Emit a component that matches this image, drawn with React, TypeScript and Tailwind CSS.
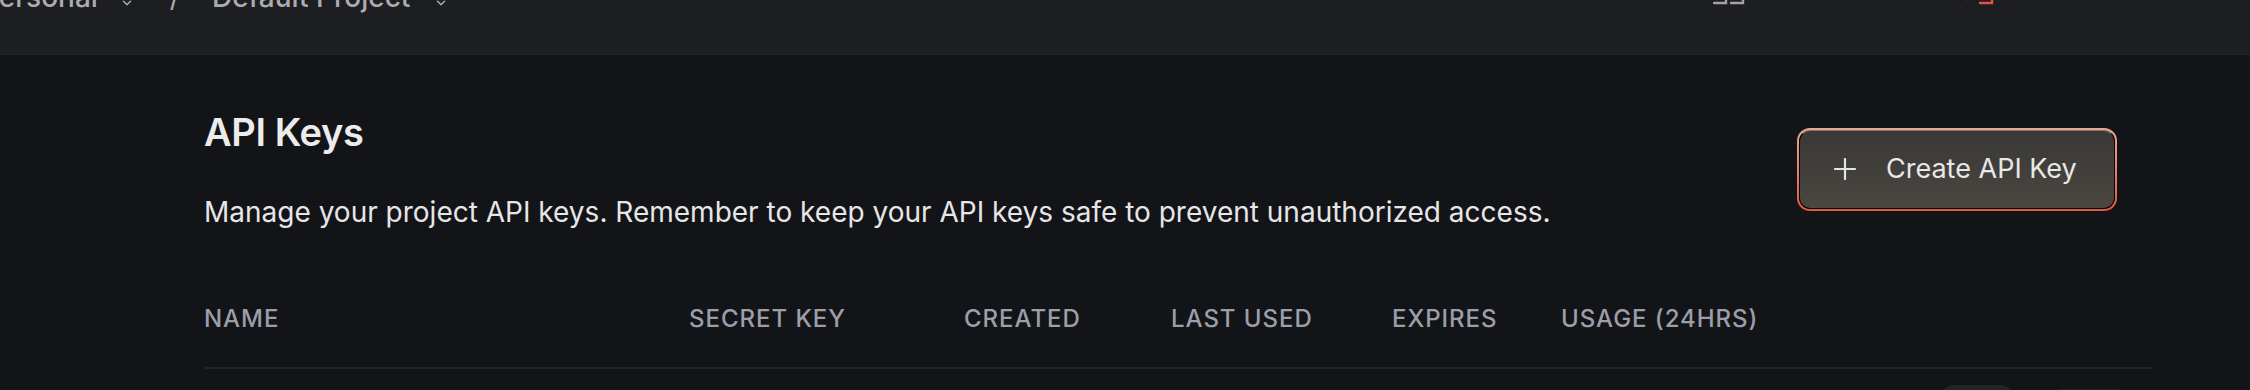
import React from "react";

function Chevron() {
  return (
    <svg width="14" height="14" viewBox="0 0 24 24" fill="none" stroke="#a9a9ab" strokeWidth="2.6" strokeLinecap="round" strokeLinejoin="round" className="translate-y-[6px]">
      <path d="M6 9l6 6 6-6" />
    </svg>
  );
}

const cols = ["NAME", "SECRET KEY", "CREATED", "LAST USED", "EXPIRES", "USAGE (24HRS)"];

export default function App() {
  return (
    <div className="h-[390px] w-[2250px] overflow-hidden bg-[#131418] font-['Inter',sans-serif]">
      <header className="h-[55px] bg-[#1d1e22] border-b border-[#23252a] overflow-hidden">
        <div className="flex items-start justify-between -mt-[20px] h-[34px]">
          <div className="flex items-center ml-[-19px] text-[28px] leading-[34px] font-medium text-[#acacae]">
            <span>Personal</span>
            <span className="ml-[22px] flex"><Chevron /></span>
            <span className="ml-[36px] font-normal">/</span>
            <span className="ml-[32px]">Default Project</span>
            <span className="ml-[24px] flex"><Chevron /></span>
          </div>
          <div className="flex w-[500px] items-start mr-[37px] text-[28px] leading-[34px] text-[#a9a9ab]">
            <svg width="32" height="25" viewBox="0 0 32 25" fill="none" stroke="#a3a3a3" strokeWidth="2.4" strokeLinecap="round" className="shrink-0">
              <path d="M1 23h12V10" />
              <path d="M18 23h12V10" />
            </svg>
            <span className="ml-[15px] -mt-[7px]">Docs</span>
            <svg width="40" height="25" viewBox="0 0 40 25" fill="none" stroke="#e5533d" strokeWidth="2.4" strokeLinecap="round" className="ml-[138px] shrink-0">
              <path d="M1 18v1" />
              <path d="M14 23h12V10" />
              <path d="M36 18v1" />
            </svg>
            <span className="ml-[85px] -mt-[7px]">Account</span>
          </div>
        </div>
      </header>

      <main className="pl-[204px] pr-[98px]">
        <div className="flex items-center justify-between pr-[35px] pt-[54px]">
          <div>
            <h1 className="text-[38px] leading-[46px] font-semibold text-[#ececec] tracking-[-0.01em]">API Keys</h1>
            <p className="mt-[40px] text-[28px] leading-[34px] text-[#e6e6e6]">
              Manage your project API keys. Remember to keep your API keys safe to prevent unauthorized access.
            </p>
          </div>
          <button className="rounded-[13px] bg-gradient-to-b from-[#eba597] to-[#e4553e] p-[2px]">
            <div className="flex h-[79px] w-[316px] items-center rounded-[11px] border border-black border-t-[#7a756f] bg-gradient-to-b from-[#393836] to-[#4a4741] pl-[34px]">
              <svg width="22" height="22" viewBox="0 0 22 22" fill="none" stroke="#e4e4e4" strokeWidth="2.2" strokeLinecap="round">
                <path d="M11 1v20M1 11h20" />
              </svg>
              <span className="ml-[30px] text-[27px] text-[#e8e8e8]">Create API Key</span>
            </div>
          </button>
        </div>

        <div className="mt-[75px] grid grid-cols-[485px_275px_207px_221px_169px_1fr] border-b-2 border-[#222328] pb-[33px]">
          {cols.map((c) => (
            <div key={c} className="text-[24px] leading-[30px] font-medium tracking-[0.04em] text-[#9c9ea9]">
              {c}
            </div>
          ))}
        </div>

        <div className="flex items-center justify-end gap-[34px] pr-[22px] pt-[16px]">
          <div className="h-[48px] w-[74px] rounded-[14px] bg-[#232428]" />
          <div className="h-[40px] w-[82px] rounded-[14px] bg-[#222327]" />
        </div>
      </main>
    </div>
  );
}
